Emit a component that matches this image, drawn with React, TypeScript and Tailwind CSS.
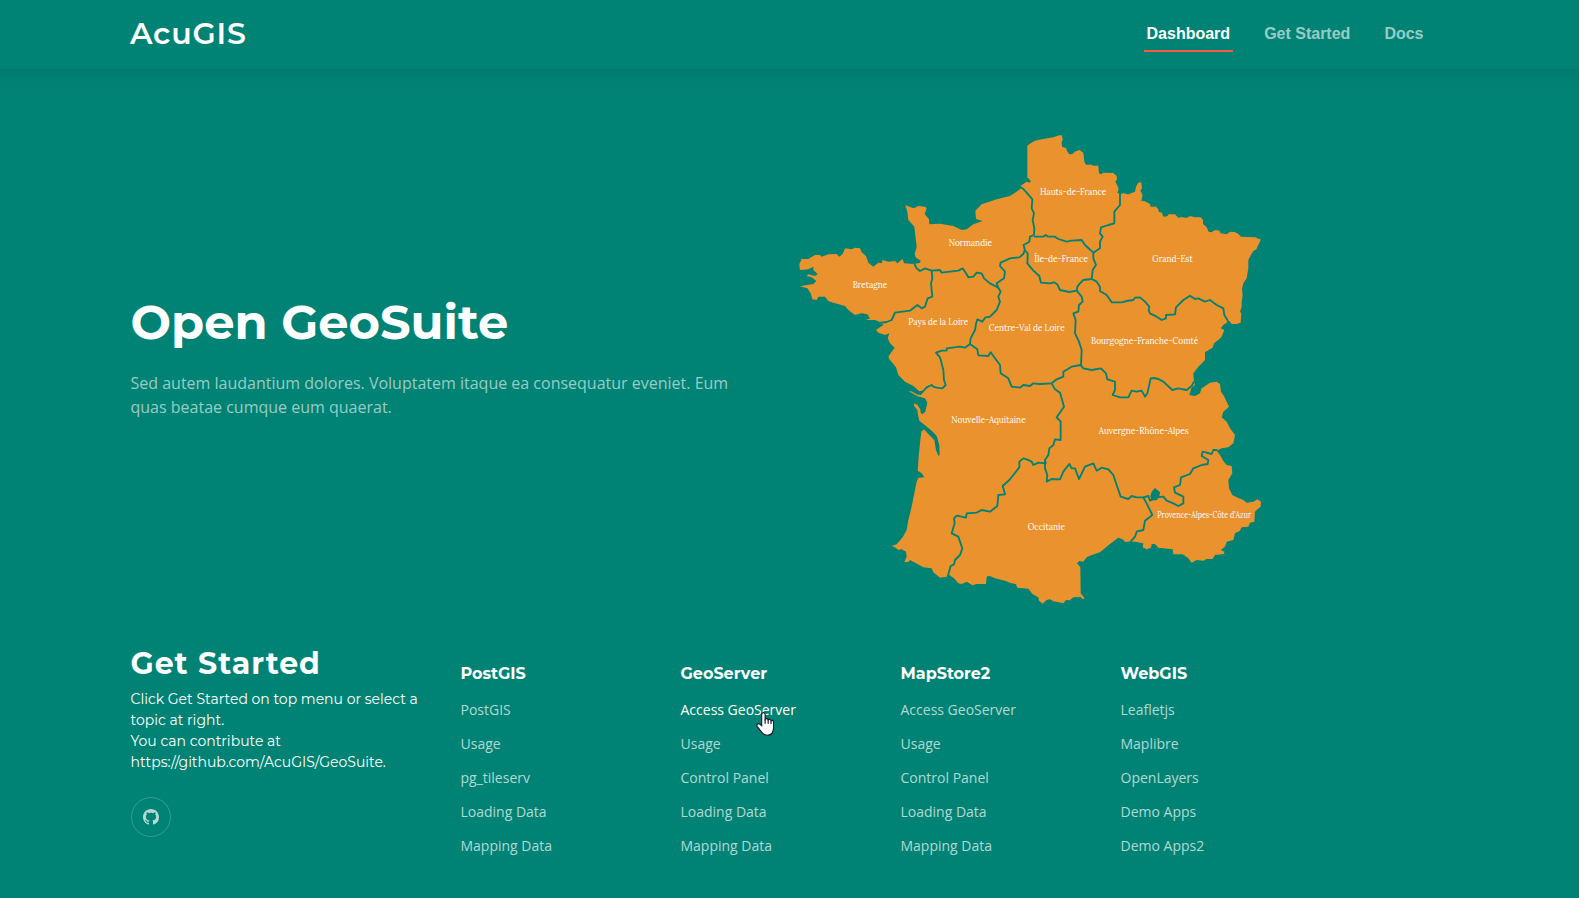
import type { ReactNode } from "react";
import { BsGithub } from "react-icons/bs";

const OUTLINE =
  "742,77 752,70 765,62 785,58 820,52 838,46 846,46 848,60 845,65 846,80 858,84 862,95 868,103 878,102 884,95 898,90 910,98 913,125 918,134 935,134 940,137 955,137 957,160 963,163 970,158 1000,159 1010,168 1011,178 1006,185 1014,200 1016,208 1012,218 1020,222 1030,220 1045,223 1065,215 1068,200 1075,188 1084,187 1086,205 1081,212 1088,225 1084,242 1095,244 1110,252 1112,260 1128,260 1135,268 1136,275 1146,278 1150,290 1162,289 1166,283 1185,283 1190,288 1195,293 1205,291 1220,294 1230,288 1245,292 1262,292 1269,300 1269,312 1280,322 1286,335 1295,337 1305,330 1318,332 1322,340 1340,343 1350,335 1365,336 1375,342 1383,350 1400,351 1425,352 1435,356 1442,356 1440,365 1432,380 1430,387 1420,393 1410,410 1405,420 1405,445 1400,475 1390,490 1386,508 1388,525 1385,545 1385,560 1380,575 1384,580 1382,608 1370,612 1355,612 1348,603 1342,603 1340,608 1330,615 1322,625 1333,630 1325,650 1315,660 1302,670 1298,683 1275,697 1275,720 1255,740 1240,760 1242,785 1245,795 1235,802 1228,825 1245,828 1260,820 1265,805 1290,788 1310,785 1320,792 1323,815 1332,828 1340,845 1347,860 1330,875 1325,892 1340,905 1350,925 1365,945 1360,970 1345,982 1325,985 1310,992 1320,1005 1330,1023 1340,1035 1355,1038 1357,1060 1345,1080 1347,1105 1357,1125 1370,1132 1390,1140 1400,1148 1420,1145 1432,1138 1443,1145 1442,1160 1432,1168 1425,1175 1423,1205 1410,1208 1405,1220 1385,1222 1380,1232 1365,1240 1360,1260 1340,1265 1335,1280 1322,1290 1333,1295 1332,1302 1305,1305 1298,1317 1280,1317 1270,1322 1250,1320 1235,1328 1225,1315 1208,1303 1180,1303 1178,1288 1135,1283 1125,1272 1115,1272 1113,1283 1100,1288 1088,1282 1090,1270 1065,1265 1050,1265 1035,1265 1028,1258 1015,1253 990,1272 960,1297 935,1305 920,1312 910,1325 898,1323 891,1330 901,1342 902,1420 914,1435 908,1438 902,1430 880,1432 870,1440 858,1440 850,1450 820,1444 810,1438 800,1440 788,1451 777,1442 775,1432 758,1423 745,1406 712,1403 708,1393 690,1388 675,1382 645,1375 628,1367 620,1370 618,1392 590,1392 577,1396 560,1385 545,1392 535,1390 522,1375 508,1365 500,1370 480,1373 460,1357 455,1345 430,1342 405,1328 390,1320 385,1327 373,1325 380,1310 378,1295 365,1288 355,1290 345,1282 335,1278 350,1273 368,1252 380,1230 385,1200 395,1160 405,1110 410,1085 415,1073 433,1072 425,1060 413,1052 416,1010 420,970 424,935 432,928 445,942 463,960 468,990 475,1007 479,1005 478,975 470,948 455,932 430,912 418,902 414,885 412,870 402,857 403,850 412,854 421,868 422,878 427,883 436,875 442,848 435,835 410,828 395,818 385,815 395,814 412,824 422,824 433,812 425,812 418,814 400,798 375,785 355,765 348,742 330,720 325,710 335,695 344,683 330,670 323,655 328,640 315,645 295,638 288,630 300,622 310,615 298,605 285,600 257,600 270,595 262,583 245,580 225,585 205,570 195,558 160,548 145,543 135,530 115,530 110,540 97,538 92,520 82,505 60,499 80,495 100,492 109,483 95,472 80,468 85,463 105,468 113,462 100,450 100,440 85,448 60,450 58,432 65,417 85,417 105,405 120,405 125,410 145,403 170,402 178,410 188,402 195,385 215,388 225,383 240,385 245,397 258,408 265,428 280,440 295,428 305,430 308,420 325,425 345,423 352,430 368,417 372,430 403,432 420,428 422,422 408,413 404,402 410,380 403,320 385,300 382,275 376,255 388,260 402,265 415,258 435,260 440,265 434,282 447,298 448,313 480,311 520,318 545,330 560,328 580,313 608,303 588,297 586,272 605,253 650,238 690,228 720,208 723,203 722,197 740,185 750,188 752,182 742,172";

const BORDERS = [
  "720,200 730,207 740,218 757,238 755,265 762,280 758,300 763,325 762,345 750,350 748,365 731,375 735,392 743,400 743,412 742,430 760,452 778,468 783,488 810,490 822,487 832,493 840,510 868,516 890,512 892,500 900,490 910,480 935,477 938,450 948,435 940,415 940,398",
  "762,350 790,350 797,345 805,350 825,350 835,357 860,365 875,362 905,360 915,375 940,398",
  "735,388 730,402 718,412 690,415 662,428 660,438 675,455 672,475 650,490 655,503",
  "403,432 410,445 420,453 435,445 455,452 480,450 485,458 535,452 548,445 558,460 565,472 580,470 590,458 605,460 612,475 630,490 655,503",
  "455,452 457,475 453,490 457,530 443,535 435,560 425,565 412,555 390,572 345,578 335,600 320,606 298,609",
  "655,503 662,515 655,530 660,545 650,570 630,590 615,593 607,605 592,598 588,612 585,630 572,655 570,672 592,688 595,706 625,708 632,697 645,715 660,735 662,760 685,775 695,800 720,803 730,795 750,798 760,790 780,792 815,790",
  "570,672 555,683 540,680 500,685 500,692 485,692 468,698 480,712 490,750 492,780 497,795 487,805 470,803 460,800 455,795 440,802 433,810 420,824",
  "890,512 905,530 908,545 897,555 895,575 880,580 887,600 885,640 897,665 905,690 903,735",
  "815,790 830,778 850,770 850,755 875,740 902,735 910,745 935,750 963,745 978,760 982,778 1005,785 1005,810 998,825 1020,832 1045,832 1055,812 1070,815 1085,812 1095,830 1102,820 1112,775 1122,774 1135,777 1150,785 1177,810 1195,805 1220,810 1235,798 1242,785",
  "935,477 950,485 960,500 960,513 980,525 995,547 1025,547 1040,543 1060,540 1065,533 1080,532 1095,545 1108,560 1106,570 1110,580 1130,590 1145,600 1158,595 1158,585 1185,583 1188,562 1210,540 1230,527 1245,537 1255,535 1275,545 1290,540 1310,555 1330,565 1333,585 1344,603",
  "1020,218 1020,255 1003,275 1003,310 985,315 963,322 960,340 968,350 960,365 960,385 940,398",
  "815,790 825,808 840,818 852,860 830,892 842,905 842,960 825,958 820,975 808,985 805,1005 795,1020 797,1030 775,1028 760,1035 755,1025 740,1018 730,1015 718,1025 718,1042 700,1065 688,1080 668,1098 675,1123 655,1125 652,1158 630,1175 605,1170 590,1178 560,1180 558,1193 530,1187 522,1195 524,1210 515,1240 535,1250 547,1285 540,1305 525,1320 522,1333 512,1338 503,1370",
  "795,1020 795,1045 802,1065 800,1085 815,1077 840,1078 850,1055 868,1032 875,1045 885,1045 897,1077 915,1040 940,1030 950,1052 965,1043 985,1048 1000,1065 1010,1095 1022,1130 1045,1137 1055,1128 1070,1132 1090,1132 1100,1150 1117,1185 1095,1202 1090,1230 1070,1235 1065,1250 1050,1267",
  "1090,1132 1105,1128 1110,1142 1125,1132 1150,1130 1160,1142 1180,1150 1195,1158 1210,1150 1210,1130 1185,1118 1182,1102 1200,1095 1203,1072 1230,1062 1240,1045 1265,1035 1283,1032 1285,1020 1265,1008 1268,995 1295,1002 1300,990 1312,990",
];

const LABELS: [string, number, number, number][] = [
  ["Hauts-de-France", 780, 225, 199],
  ["Normandie", 506, 378, 130],
  ["Île-de-France", 763, 426, 161],
  ["Grand-Est", 1117, 426, 121],
  ["Bretagne", 218, 504, 104],
  ["Pays de la Loire", 385, 614, 180],
  ["Centre-Val de Loire", 626, 634, 228],
  ["Bourgogne-Franche-Comté", 933, 672, 322],
  ["Nouvelle-Aquitaine", 514, 909, 223],
  ["Auvergne-Rhône-Alpes", 956, 942, 270],
  ["Occitanie", 743, 1229, 112],
  ["Provence-Alpes-Côte d'Azur", 1132, 1195, 281],
];

function FranceMap() {
  return (
    <svg viewBox="0 0 1500 1470" className="h-[490px] w-[500px] shrink-0" role="img">
      <polygon points={OUTLINE} fill="#e9922e" />
      <g fill="none" stroke="#008374" strokeWidth="5.5" strokeLinejoin="round">
        {BORDERS.map((b) => (
          <polyline key={b} points={b} />
        ))}
      </g>
      <path d="M1125 1108l6 5 6 5-2 10-6 9-12 1-3-10 4-11z" fill="#008374" stroke="#008374" strokeWidth="6" />
      <g fill="#fff" fontSize="27" fontFamily="Lora,'Noto Serif','DejaVu Serif','Liberation Serif',serif">
        {LABELS.map(([t, x, y, w]) => (
          <text key={t} x={x} y={y} textLength={w} lengthAdjust="spacingAndGlyphs">
            {t}
          </text>
        ))}
      </g>
    </svg>
  );
}

function HandCursor() {
  return (
    <svg viewBox="0 0 17 23" className="absolute left-[75px] top-[18px] h-[25px] w-[18.500px]">
      <path
        d="M5.2 13.5V3.2c0-2.200 3.200-2.200 3.200 0v4.300c.6-.8 2.500-.6 2.800.6.7-.7 2.400-.4 2.600.8.9-.6 2.400-.1 2.400 1.400v5.200c0 2.200-.6 3.300-1.300 4.600-.9 1.700-2.400 2.200-4.600 2.200-2.500 0-3.700-.9-4.800-2.500L1.200 14.400c-1.300-2.100.9-3.700 2.500-2.200z"
        fill="#fff"
        stroke="#1b1b2b"
        strokeWidth="1.100"
      />
      <path d="M8.400 7.500v4.200M11.200 8v3.700M13.800 9v3" stroke="#1b1b2b" strokeWidth="1.100" />
    </svg>
  );
}

const COLUMNS: { title: string; items: string[]; active?: number }[] = [
  { title: "PostGIS", items: ["PostGIS", "Usage", "pg_tileserv", "Loading Data", "Mapping Data"] },
  { title: "GeoServer", items: ["Access GeoServer", "Usage", "Control Panel", "Loading Data", "Mapping Data"], active: 0 },
  { title: "MapStore2", items: ["Access GeoServer", "Usage", "Control Panel", "Loading Data", "Mapping Data"] },
  { title: "WebGIS", items: ["Leafletjs", "Maplibre", "OpenLayers", "Demo Apps", "Demo Apps2"] },
];

function NavItem({ children, active }: { children: ReactNode; active?: boolean }) {
  return (
    <a className={active ? "border-b-2 border-[#f85a40] px-[2.500px] pb-[4px] text-white" : "border-b-2 border-transparent px-[2.500px] pb-[4px] text-white/60"}>
      {children}
    </a>
  );
}

export default function App() {
  return (
    <div className="h-[898px] overflow-hidden bg-[#008374] font-['Open_Sans',sans-serif] text-white">
      <header className="-mx-5 flex h-[69px] items-start justify-between pl-[150px] pr-[173px] shadow-[0_2px_20px_rgba(0,0,0,0.1)]">
        <h1 className="mt-[16px] font-['Montserrat','Inter',sans-serif] text-[30px] font-semibold leading-[36px] tracking-[0.800px]">AcuGIS</h1>
        <nav className="mt-[22px] flex gap-[29px] font-['Liberation_Sans',sans-serif] text-[16px] font-bold leading-[24px]">
          <NavItem active>Dashboard</NavItem>
          <NavItem>Get Started</NavItem>
          <NavItem>Docs</NavItem>
        </nav>
      </header>

      <section className="flex h-[561px] items-start pl-[130.500px]">
        <div className="mt-[224px] w-[649.500px]">
          <h2 className="whitespace-nowrap font-['Montserrat','Inter',sans-serif] text-[48px] font-bold leading-[58px]">Open GeoSuite</h2>
          <p className="mt-[20px] w-[610px] text-[16px] leading-[24px] text-white/60">
            Sed autem laudantium dolores. Voluptatem itaque ea consequatur eveniet. Eum quas beatae cumque eum quaerat.
          </p>
        </div>
        <div className="mt-[51px]">
          <FranceMap />
        </div>
      </section>

      <footer className="flex items-start pl-[130.500px]">
        <div className="w-[330px] font-['Montserrat','Inter',sans-serif]">
          <h3 className="mt-[15px] text-[30px] font-bold leading-[38px] tracking-[1px]">Get Started</h3>
          <p className="mt-[6px] whitespace-nowrap text-[14px] leading-[21px]">
            Click Get Started on top menu or select a<br />
            topic at right.
            <br />
            You can contribute at
            <br />
            https://github.com/AcuGIS/GeoSuite.
          </p>
          <a className="mt-[24px] flex size-[40px] items-center justify-center rounded-full border border-white/20 text-white/70">
            <BsGithub className="size-[16px]" />
          </a>
        </div>
        {COLUMNS.map((c) => (
          <div key={c.title} className="w-[220px] pt-[32px]">
            <h4 className="font-['Montserrat','Inter',sans-serif] text-[16px] font-bold leading-[24px]">{c.title}</h4>
            <ul className="mt-[7px]">
              {c.items.map((it, i) => (
                <li key={it} className="relative h-[34px] text-[14px] leading-[34px]">
                  <a className={i === c.active ? "text-white" : "text-white/70"}>{it}</a>
                  {i === c.active && <HandCursor />}
                </li>
              ))}
            </ul>
          </div>
        ))}
      </footer>
    </div>
  );
}
